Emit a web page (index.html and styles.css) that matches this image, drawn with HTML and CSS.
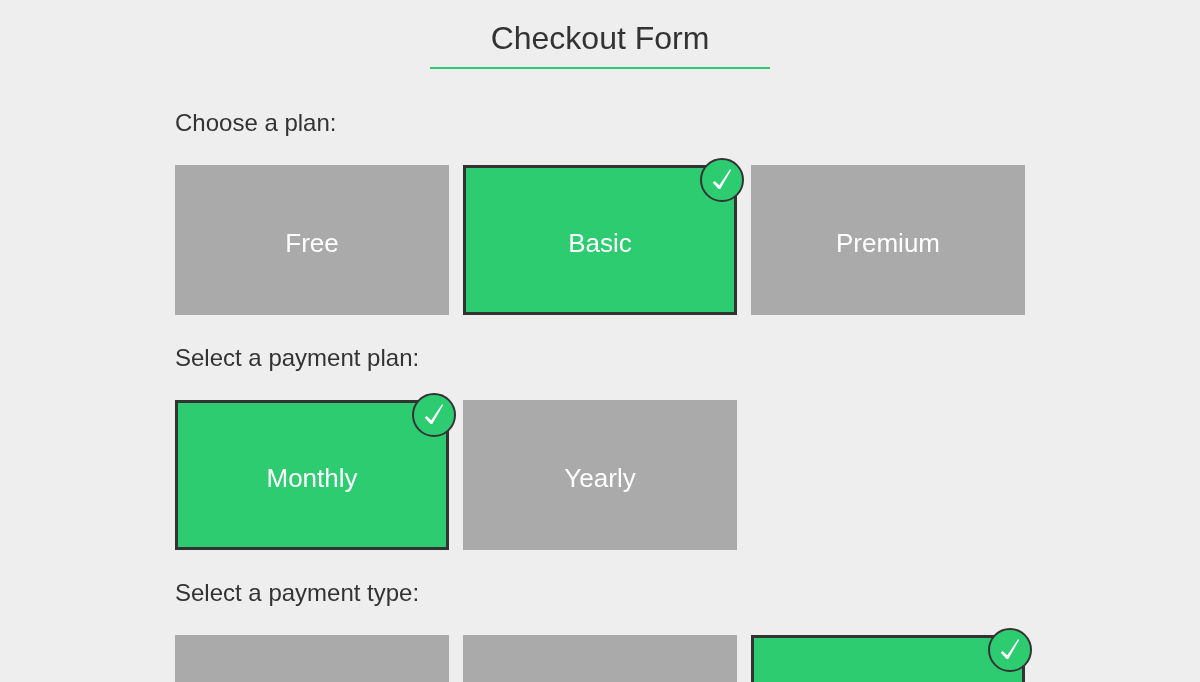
FILE: index.html
```html
<!DOCTYPE html>
<html lang="en">
<head>
<meta charset="utf-8">
<title>Checkout Form</title>
<link rel="stylesheet" href="styles.css">
</head>
<body>
<main class="page">
  <h1 class="title">Checkout Form</h1>
  <section class="group">
    <h2 class="label">Choose a plan:</h2>
    <div class="options">
      <div class="card">Free</div>
      <div class="card selected">Basic<span class="check"><svg class="tick" viewBox="0 0 44 44"><polygon points="12.8,24.8 14.6,23 19.3,27.2 30,11.3 31.1,12 20.3,31 18.6,31"/></svg></span></div>
      <div class="card">Premium</div>
    </div>
  </section>
  <section class="group">
    <h2 class="label">Select a payment plan:</h2>
    <div class="options">
      <div class="card selected">Monthly<span class="check"><svg class="tick" viewBox="0 0 44 44"><polygon points="12.8,24.8 14.6,23 19.3,27.2 30,11.3 31.1,12 20.3,31 18.6,31"/></svg></span></div>
      <div class="card">Yearly</div>
    </div>
  </section>
  <section class="group">
    <h2 class="label">Select a payment type:</h2>
    <div class="options">
      <div class="card"></div>
      <div class="card"></div>
      <div class="card selected"><span class="check"><svg class="tick" viewBox="0 0 44 44"><polygon points="12.8,24.8 14.6,23 19.3,27.2 30,11.3 31.1,12 20.3,31 18.6,31"/></svg></span></div>
    </div>
  </section>
</main>
</body>
</html>
```

FILE: styles.css
```css
* { box-sizing: border-box; }
html, body { margin: 0; background: #eee; }
body {
  font-family: "Liberation Sans", Arial, sans-serif;
  color: #333;
}
.page { width: 850px; margin: 0 auto; will-change: transform; }
.title {
  width: 340px;
  height: 69px;
  margin: 0 auto;
  padding-top: 20px;
  border-bottom: 2px solid #2ecc71;
  font-size: 32px;
  font-weight: 400;
  line-height: 37px;
  text-align: center;
}
.group { padding-top: 40px; }
.group + .group { padding-top: 29px; }
.label {
  margin: 0 0 29px;
  height: 27px;
  font-size: 24px;
  font-weight: 400;
  line-height: 27px;
}
.options { display: flex; gap: 14px; }
.card {
  position: relative;
  display: flex;
  align-items: center;
  justify-content: center;
  width: 274px;
  height: 150px;
  padding-top: 6px;
  background: #aaa;
  color: #fff;
  font-size: 26px;
}
.card.selected { background: #2ecc71; border: 3px solid #333; }
.check {
  position: absolute;
  top: -10px;
  right: -10px;
  width: 44px;
  height: 44px;
  border: 2px solid #333;
  border-radius: 50%;
  background: #2ecc71;
}
.tick {
  display: block;
  width: 44px;
  height: 44px;
  margin: -2px;
  fill: #fff;
}
```
